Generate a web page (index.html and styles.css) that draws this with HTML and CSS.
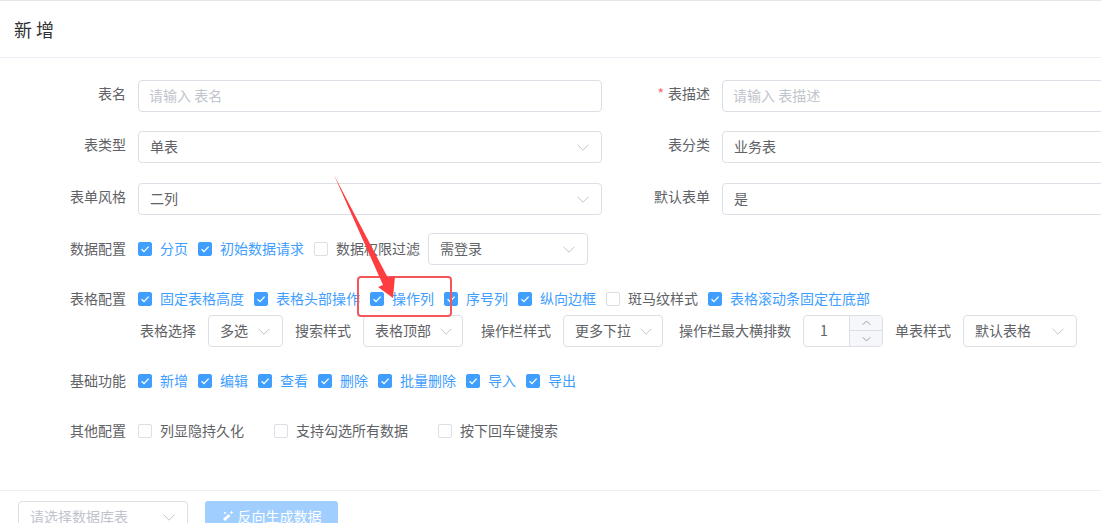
FILE: index.html
```html
<!DOCTYPE html>
<html lang="zh-CN">
<head>
<meta charset="utf-8">
<title>新增</title>
<link rel="stylesheet" href="styles.css">
</head>
<body>
<svg width="0" height="0" class="defs"><defs>
<symbol id="chev" viewBox="0 0 12 7"><path d="M.6.8 6 6.2 11.4.8" fill="none" stroke="#c0c4cc" stroke-width="1"/></symbol>
<symbol id="tick" viewBox="0 0 14 14"><path d="M3.6 7.2 6 9.6l4.6-5" fill="none" stroke="#fff" stroke-width="1.3"/></symbol>
</defs></svg>
<div class="page">
  <header class="head">新 增</header>
  <main class="form">
    <div class="grid">
      <div class="field"><label class="lab">表名</label><div class="box ph input">请输入 表名</div></div>
      <div class="field"><label class="lab"><i class="req">*</i>表描述</label><div class="box ph input">请输入 表描述</div></div>
      <div class="field"><label class="lab">表类型</label><div class="box">单表<svg class="chev"><use href="#chev"/></svg></div></div>
      <div class="field"><label class="lab">表分类</label><div class="box">业务表</div></div>
      <div class="field"><label class="lab">表单风格</label><div class="box">二列<svg class="chev"><use href="#chev"/></svg></div></div>
      <div class="field"><label class="lab">默认表单</label><div class="box">是</div></div>
    </div>
    <div class="row r-data">
      <label class="lab">数据配置</label>
      <div class="checks">
        <span class="ck on"><b><svg><use href="#tick"/></svg></b>分页</span>
        <span class="ck on"><b><svg><use href="#tick"/></svg></b>初始数据请求</span>
        <span class="ck"><b></b>数据权限过滤</span>
        <div class="box w160">需登录<svg class="chev"><use href="#chev"/></svg></div>
      </div>
    </div>
    <div class="row r-table">
      <label class="lab">表格配置</label>
      <div class="checks">
        <span class="ck on"><b><svg><use href="#tick"/></svg></b>固定表格高度</span>
        <span class="ck on"><b><svg><use href="#tick"/></svg></b>表格头部操作</span>
        <span class="ck on"><b><svg><use href="#tick"/></svg></b>操作列</span>
        <span class="ck on"><b><svg><use href="#tick"/></svg></b>序号列</span>
        <span class="ck on"><b><svg><use href="#tick"/></svg></b>纵向边框</span>
        <span class="ck"><b></b>斑马纹样式</span>
        <span class="ck on"><b><svg><use href="#tick"/></svg></b>表格滚动条固定在底部</span>
      </div>
    </div>
    <div class="sub">
      <span class="sl">表格选择</span>
      <div class="box w75">多选<svg class="chev"><use href="#chev"/></svg></div>
      <span class="sl g12">搜索样式</span>
      <div class="box w100">表格顶部<svg class="chev"><use href="#chev"/></svg></div>
      <span class="sl g18">操作栏样式</span>
      <div class="box w100">更多下拉<svg class="chev"><use href="#chev"/></svg></div>
      <span class="sl g16">操作栏最大横排数</span>
      <div class="num"><span class="val">1</span><div class="step"><span><svg viewBox="0 0 10 6"><path d="M.8 5 5 .8 9.200 5" fill="none" stroke="#909399"/></svg></span><span><svg viewBox="0 0 10 6"><path d="M.8 1 5 5.200 9.200 1" fill="none" stroke="#909399"/></svg></span></div></div>
      <span class="sl g12">单表样式</span>
      <div class="box w114">默认表格<svg class="chev"><use href="#chev"/></svg></div>
    </div>
    <div class="row r-base">
      <label class="lab">基础功能</label>
      <div class="checks">
        <span class="ck on"><b><svg><use href="#tick"/></svg></b>新增</span>
        <span class="ck on"><b><svg><use href="#tick"/></svg></b>编辑</span>
        <span class="ck on"><b><svg><use href="#tick"/></svg></b>查看</span>
        <span class="ck on"><b><svg><use href="#tick"/></svg></b>删除</span>
        <span class="ck on"><b><svg><use href="#tick"/></svg></b>批量删除</span>
        <span class="ck on"><b><svg><use href="#tick"/></svg></b>导入</span>
        <span class="ck on"><b><svg><use href="#tick"/></svg></b>导出</span>
      </div>
    </div>
    <div class="row r-other">
      <label class="lab">其他配置</label>
      <div class="checks wide">
        <span class="ck"><b></b>列显隐持久化</span>
        <span class="ck"><b></b>支持勾选所有数据</span>
        <span class="ck"><b></b>按下回车键搜索</span>
      </div>
    </div>
  </main>
  <footer class="foot">
    <div class="box w170 ph">请选择数据库表<svg class="chev"><use href="#chev"/></svg></div>
    <div class="btn"><svg viewBox="0 0 12 12"><path d="M2 10 7.500 5" stroke="#fff" stroke-width="3" fill="none"/><path d="M9.500 1v3M8 2.500h3M3 2v2M2 3h2" stroke="#fff" stroke-width=".9" fill="none"/></svg>反向生成数据</div>
  </footer>
  <div class="redbox"></div>
  <svg class="arrow" viewBox="0 0 70 140"><path d="M1 1 55 104 62 102 60 124 45 113 50 111Z" fill="#fe3d40"/></svg>
</div>
</body>
</html>
```

FILE: styles.css
```css
* { box-sizing: border-box; }
html, body { margin: 0; height: 100%; background: #fff; }
.defs { position: absolute; }
.page {
  position: relative;
  width: 1101px;
  height: 523px;
  overflow: hidden;
  font: 14px/20px "Noto Sans CJK SC", "Liberation Sans", sans-serif;
  color: #606266;
  border-top: 1px solid #e6e6e6;
}
.head {
  height: 57px;
  padding: 16px 14px 0;
  font-size: 18px;
  line-height: 24px;
  color: #303133;
  border-bottom: 1px solid #ebeef5;
}
.form { padding: 22px 0 0 26px; height: 432.500px; border-bottom: 1px solid #ebeef5; }
.grid { display: grid; grid-template-columns: 576px 576px; column-gap: 8px; row-gap: 19.400px; width: 1160px; }
.field, .row { display: flex; align-items: center; height: 32px; }
.lab { width: 100px; flex: none; margin-right: 12px; text-align: right; margin-top: -6px; }
.req { color: #f56c6c; font-style: normal; margin-right: 4px; }
.box {
  position: relative;
  flex: 1;
  display: flex;
  align-items: center;
  height: 32px;
  padding: 0 10px 2px 11px;
  border: 1px solid #dcdfe6;
  border-radius: 4px;
  background: #fff;
  white-space: nowrap;
}
.input { padding: 0 10px 2px; }
.ph { color: #c0c4cc; }
.chev { position: absolute; right: 12px; top: 12px; width: 12px; height: 7px; }
.w75 { flex: none; width: 75px; }
.w100 { flex: none; width: 100px; }
.w114 { flex: none; width: 114px; }
.w160 { flex: none; width: 160px; }
.w170 { flex: none; width: 170px; }
.w100 .chev { right: 10px; }
.r-data { margin-top: 18.200px; }
.r-table { margin-top: 18px; }
.r-base, .r-other { margin-top: 18px; }
.row .lab { margin-top: -2px; }
.checks { display: flex; align-items: center; gap: 10px; }
.checks.wide { gap: 30px; }
.checks .box { margin-left: -2px; }
.ck { display: inline-flex; align-items: center; gap: 8px; white-space: nowrap; padding-bottom: 2px; }
.ck b {
  display: block;
  width: 14px;
  height: 14px;
  margin-top: 2px;
  border: 1px solid #dcdfe6;
  border-radius: 2px;
  background: #fff;
}
.ck.on { color: #409eff; }
.ck.on b { background: #409eff; border-color: #409eff; }
.ck b svg { display: block; width: 14px; height: 14px; margin: -1px; }
.sub { display: flex; align-items: center; height: 32px; padding-left: 114px; }
.sl { margin-right: 12px; padding-bottom: 2px; white-space: nowrap; }
.g12 { margin-left: 12px; }
.g18 { margin-left: 18px; }
.g16 { margin-left: 16px; }
.num {
  display: flex;
  width: 80px;
  height: 32px;
  flex: none;
  border: 1px solid #dcdfe6;
  border-radius: 4px;
  overflow: hidden;
}
.val { flex: 1; padding-left: 16px; line-height: 28px; }
.step { width: 33px; display: flex; flex-direction: column; border-left: 1px solid #dcdfe6; background: #f5f7fa; }
.step span { flex: 1; display: flex; align-items: center; justify-content: center; }
.step span + span { border-top: 1px solid #dcdfe6; }
.step svg { width: 9px; height: 6px; }
.foot { display: flex; gap: 17px; padding: 10px 0 0 18px; }
.btn {
  width: 133px;
  height: 32px;
  padding-bottom: 1px;
  border-radius: 3px;
  background: #a0cfff;
  color: #fff;
  display: flex;
  align-items: center;
  justify-content: center;
  gap: 4px;
}
.btn svg { width: 12px; height: 12px; }
.redbox {
  position: absolute;
  left: 357px;
  top: 275px;
  width: 95px;
  height: 41px;
  border: 2px solid #f5565a;
  border-radius: 4px;
}
.arrow { position: absolute; left: 333px; top: 173px; width: 70px; height: 140px; }
```
